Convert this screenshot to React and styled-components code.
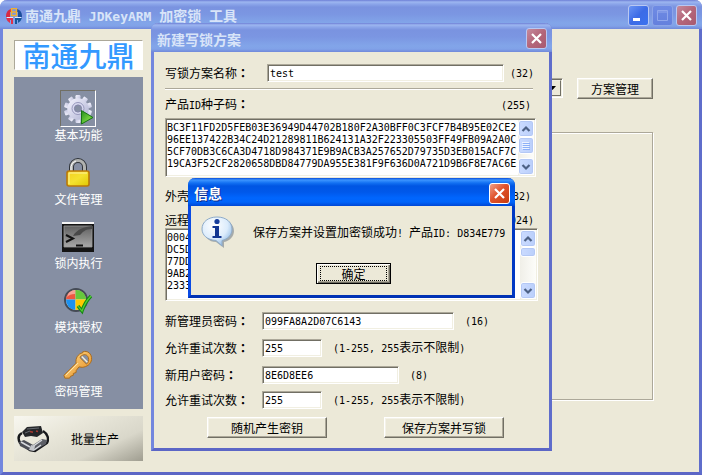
import React from "react";
import styled, { createGlobalStyle, css } from "styled-components";

const cjk = '"Noto Sans CJK SC", sans-serif';
const mono = '"DejaVu Sans Mono", "Liberation Mono", monospace';
const face = "#ece9d8";

const Global = createGlobalStyle`
  *, *::before, *::after { box-sizing: border-box; }
  body { margin: 0; background: #fff; color: #000; font: 12px/14px ${cjk}; }
  button, input, textarea, select { font: inherit; color: inherit; margin: 0; border-radius: 0; }
`;

const sunken = css`
  border: 1px solid;
  border-color: #aca899 #fff #fff #aca899;
  box-shadow: inset 1px 1px #716f64, inset -1px -1px #f1efe2;
  background: #fff;
`;

const inactiveTitle = "linear-gradient(#6d7fd6 0, #9db6f0 2px, #8ca6ea 4px, #7a93e0 7px, #7b96e2 14px, #82a5e9 23px, #81a2e8 26px, #7189da 29px)";
const activeTitle = "linear-gradient(#0a4bd8 0, #3d95ff 2px, #1270f2 5px, #0055e3 8px, #0058ea 14px, #0066fe 20px, #0064fa 24px, #0046d4 28px)";

const Latin = styled.span`
  font-family: ${mono};
  font-size: ${(p) => (p.$title ? "13px" : "10px")};
  white-space: pre;
`;
const ColonMark = styled.span`
  font-family: "Noto Sans CJK TC", sans-serif;
  font-weight: 700;
`;

const Window = styled.section`
  display: flex;
  flex-direction: column;
  border: 3px solid;
  border-top: 0;
  border-color: ${(p) => (p.$active ? "#0a4be4 #0038c4 #0032b4 #0a4be4" : "#7387de #5f6dcb #5c66c6 #7387de")};
  border-radius: 7px 7px 0 0;
  background: ${face};
`;
const MainWindow = styled(Window)`
  position: relative;
  min-height: 100vh;
`;
const Dialog = styled(Window)`
  position: absolute;
  left: 148px;
  top: 23px;
  width: 401px;
`;
const MessageBox = styled(Window)`
  position: absolute;
  left: 185px;
  top: 178px;
  width: 327px;
`;
const TitleBar = styled.header`
  display: flex;
  align-items: center;
  gap: 3px;
  height: ${(p) => (p.$active ? "28px" : "29px")};
  margin: 0 -3px;
  padding: 2px 5px 0 6px;
  border-radius: 7px 7px 0 0;
  background: ${(p) => (p.$active ? activeTitle : inactiveTitle)};
`;
const Title = styled.h1`
  flex: 1;
  margin: 0;
  font-size: 14px;
  line-height: 20px;
  font-weight: 700;
  white-space: pre;
  color: ${(p) => (p.$active ? "#fff" : "#d8e4f8")};
  text-shadow: ${(p) => (p.$active ? "1px 1px #0a2a8c" : "none")};
`;
const captionTones = {
  close: ["linear-gradient(135deg, #f0a088, #e0532c 45%, #c83c10)", "#fff"],
  closeDim: ["linear-gradient(135deg, #c58a9c, #b4667a 50%, #a85a70)", "#b9c8f2"],
  min: ["linear-gradient(135deg, #6a94f4, #3c6be6 50%, #3a72f0)", "#b9c8f2"],
  max: ["linear-gradient(#6f8be4, #6480dd)", "#8ca4e8"],
};
const Caption = styled.button`
  display: grid;
  place-items: center;
  width: 21px;
  height: 21px;
  padding: 0;
  border: 1px solid ${(p) => captionTones[p.$tone][1]};
  border-radius: 3px;
  background: ${(p) => captionTones[p.$tone][0]};
`;

const PushButton = styled.button`
  width: ${(p) => p.$w};
  height: 21px;
  padding: 0;
  line-height: 14px;
  border: 1px solid;
  border-color: #fff #716f64 #716f64 #fff;
  box-shadow: inset -1px -1px #aca899, inset 1px 1px #f4f2e8;
  background: ${face};
`;
const DefaultButton = styled.button`
  align-self: center;
  width: 75px;
  height: 21px;
  padding: 2px 3px;
  border: 1px solid #000;
  box-shadow: inset 1px 1px #fff, inset -1px -1px #716f64, inset -2px -2px #aca899;
  background: ${face};
  line-height: 13px;
  span { display: block; border: 1px dotted #000; }
`;

const Desk = styled.div`
  flex: 1;
  display: flex;
  padding: 11px;
`;
const Sidebar = styled.aside`
  display: flex;
  flex-direction: column;
  width: 129px;
  gap: 7px;
`;
const LogoBox = styled.div`
  display: grid;
  place-items: center;
  height: 30px;
  border: 1px solid;
  border-color: #aca899 #fff #fff #aca899;
  background: #fff;
  color: #3399ff;
  font: 500 28px/26px "Noto Sans CJK SC", sans-serif;
  white-space: nowrap;
`;
const Nav = styled.nav`
  display: flex;
  flex-direction: column;
  align-items: center;
  gap: 12px;
  height: 332px;
  padding-top: 13px;
  background: #868fa3;
`;
const NavItem = styled.button`
  display: flex;
  flex-direction: column;
  align-items: center;
  gap: 1px;
  padding: 0;
  border: 0;
  background: none;
  color: #fff;
  line-height: 14px;
`;
const IconFrame = styled.span`
  display: grid;
  place-items: center;
  width: 36px;
  height: 37px;
  border: 1px solid;
  border-color: ${(p) => (p.$on ? "#716f64 #fff #fff #716f64" : "transparent")};
`;
const BatchButton = styled.button`
  display: flex;
  align-items: center;
  gap: 22px;
  height: 45px;
  padding: 0 3px;
  border: 0;
  background: linear-gradient(155deg, #f8f7f0 0, #e9e7da 35%, #d9d7ca 70%, #9f9d90 100%);
`;
const Workspace = styled.main`
  flex: 1;
  display: flex;
  flex-direction: column;
  padding: 38px 35px 0 20px;
  gap: 33px;
`;
const Toolbar = styled.div`
  display: flex;
  justify-content: flex-end;
  gap: 14px;
`;
const Combo = styled.span`
  display: flex;
  width: 220px;
  height: 20px;
  padding: 1px;
  ${sunken}
`;
const ComboSelect = styled.select`
  flex: 1;
  appearance: none;
  border: 0;
  padding: 0;
  background: transparent;
`;
const ComboArrow = styled.span`
  display: grid;
  place-items: center;
  width: 17px;
  border: 1px solid;
  border-color: #f1efe2 #716f64 #716f64 #f1efe2;
  background: ${face};
`;
const Group = styled.div`
  height: 268px;
  border: 1px solid #aca899;
  box-shadow: 1px 1px #fff, inset 1px 1px #fff;
`;

const Form = styled.form`
  display: flex;
  flex-direction: column;
  padding: 12px 11px 10px;
`;
const Row = styled.div`
  display: flex;
  align-items: center;
  height: ${(p) => p.$h}px;
  margin-top: ${(p) => p.$gap || 0}px;
  white-space: nowrap;
`;
const Label = styled.label`
  width: ${(p) => p.$w || "auto"};
  flex: ${(p) => (p.$w ? "none" : 1)};
`;
const Field = styled.input`
  width: ${(p) => p.$w};
  height: 100%;
  padding: 0 2px;
  ${sunken}
  font-family: ${mono};
  font-size: 10px;
`;
const Note = styled.span`
  margin-left: ${(p) => p.$gap || 0}px;
  margin-right: ${(p) => p.$end || 0}px;
`;
const Rule = styled.hr`
  width: 368px;
  margin: 6px 0 0;
  border: 0;
  border-top: 1px solid #aca899;
  border-bottom: 1px solid #fff;
`;
const TextBox = styled.div`
  display: flex;
  width: ${(p) => p.$w};
  height: ${(p) => p.$h}px;
  margin-top: ${(p) => p.$gap}px;
  padding: 1px;
  ${sunken}
`;
const Area = styled.textarea`
  flex: 1;
  min-width: 0;
  padding: 2px 0 0;
  border: 0;
  outline: 0;
  resize: none;
  overflow: hidden;
  white-space: pre;
  background: transparent;
  font-family: ${mono};
  font-size: 10px;
  line-height: 12px;
`;
const ScrollTrack = styled.div`
  display: flex;
  flex-direction: column;
  width: 16px;
  background: linear-gradient(90deg, #f0efe8, #fdfdfa);
`;
const ScrollPiece = styled.span`
  display: grid;
  place-items: center;
  height: ${(p) => p.$h}px;
  margin-top: ${(p) => (p.$last ? "auto" : 0)};
  border: 1px solid #fff;
  border-radius: 3px;
  background: linear-gradient(90deg, #cbdbff, #bacffb);
  box-shadow: inset 0 0 0 1px #b4c8f5;
`;
const Actions = styled.div`
  display: flex;
  justify-content: space-between;
  margin-top: 8px;
  padding: 0 34px 0 42px;
`;
const MessageBody = styled.div`
  display: flex;
  flex-direction: column;
  padding: 9px 6px 11px 10px;
`;
const MessageRow = styled.div`
  display: flex;
  gap: 18px;
  height: 48px;
  white-space: nowrap;
  p { margin: 10px 0 0; line-height: 14px; }
`;

const Cross = () => (
  <svg width="13" height="13" viewBox="0 0 13 13" aria-hidden="true">
    <path d="M2 2l9 9M11 2l-9 9" stroke="#fff" strokeWidth="2.2" />
  </svg>
);
const MinGlyph = () => (
  <svg width="13" height="13" viewBox="0 0 13 13" aria-hidden="true"><path d="M1 9h7v3H1z" fill="#fff" /></svg>
);
const MaxGlyph = () => (
  <svg width="13" height="13" viewBox="0 0 13 13" aria-hidden="true">
    <path d="M1.500 1.500h10v10h-10zM1 3h11" fill="none" stroke="#91a7ec" />
  </svg>
);
const Chevron = ({ down }) => (
  <svg width="10" height="8" viewBox="0 0 10 8" aria-hidden="true">
    <path d={down ? "M1.500 2L5 5.500 8.500 2" : "M1.500 6L5 2.500 8.500 6"} fill="none" stroke="#4d6185" strokeWidth="2.200" />
  </svg>
);
const Grip = () => (
  <svg width="8" height="8" viewBox="0 0 8 8" aria-hidden="true">
    <path d="M0 .5h7M0 2.500h7M0 4.500h7M0 6.500h7" stroke="#eef4ff" />
    <path d="M1 1.500h7M1 3.500h7M1 5.500h7M1 7.500h7" stroke="#8cb0f8" />
  </svg>
);
const AppMark = () => (
  <svg width="16" height="16" viewBox="0 0 16 16" aria-hidden="true">
    <path d="M5 1A7.500 7.500 0 0 0 0 8v1h4V4h1z" fill="#d82842" />
    <path d="M0 10h7v6H5V12H4v3A8 8 0 0 1 0 10z" fill="#e0304a" />
    <path d="M11 1a7.500 7.500 0 0 1 5 7v1h-4V4h-1z" fill="#1d4e9c" />
    <path d="M16 10H9v6h2v-4h1v3a8 8 0 0 0 4-5z" fill="#16569c" />
    <path d="M5.500.5h5v7h-5zM5.500 4h5" fill="none" stroke="#f0b030" strokeWidth="1.400" />
    <path d="M1 9.500h6M9 9.500h6" stroke="#fff" strokeWidth=".8" />
  </svg>
);
const teeth = [0, 36, 72, 108, 144, 180, 216, 252, 288, 324];
const Gear = () => (
  <svg width="34" height="34" viewBox="0 0 34 34" aria-hidden="true">
    <defs>
      <linearGradient id="gearFill" x2="1" y2="1"><stop stopColor="#f5f5ff" /><stop offset="1" stopColor="#aeb1d2" /></linearGradient>
      <linearGradient id="playFill" x2="1" y2="1"><stop stopColor="#238d1c" /><stop offset=".6" stopColor="#6fce3c" /><stop offset="1" stopColor="#3da62c" /></linearGradient>
    </defs>
    <g fill="url(#gearFill)">
      {teeth.map((a) => <rect key={a} x="14.500" y="3" width="5" height="8" rx="1.200" transform={`rotate(${a} 17 17)`} />)}
      <circle cx="17" cy="17" r="10.700" />
    </g>
    <circle cx="17" cy="16.500" r="6" fill="#d9daf0" stroke="#9899bd" />
    <circle cx="17" cy="16.500" r="3.600" fill="#868fa3" stroke="#8385a8" />
    <path d="M20.500 18.500v13.500L32 25.500z" fill="url(#playFill)" stroke="#177414" />
  </svg>
);
const Padlock = () => (
  <svg width="24" height="30" viewBox="0 0 24 30" aria-hidden="true">
    <defs><linearGradient id="lockFill" x2="1" y2="1"><stop stopColor="#f4cf20" /><stop offset=".5" stopColor="#f4e130" /><stop offset="1" stopColor="#e0c800" /></linearGradient></defs>
    <path d="M5.500 14V9a6.500 6.500 0 0 1 13 0v5" fill="none" stroke="#30343a" strokeWidth="5" />
    <path d="M5.500 14V9a6.500 6.500 0 0 1 13 0v5" fill="none" stroke="#b0b2b0" strokeWidth="3" />
    <path d="M5 13V8.500A6.500 6.500 0 0 1 10 3" fill="none" stroke="#fff" />
    <rect x="1" y="13" width="22" height="15" rx="2" fill="url(#lockFill)" stroke="#ba7808" strokeWidth="1.600" />
    <path d="M3 26V15h18" fill="none" stroke="#fff2a0" />
  </svg>
);
const Terminal = () => (
  <svg width="32" height="32" viewBox="0 0 32 32" aria-hidden="true">
    <defs><linearGradient id="termFill" x2="0" y2="1"><stop stopColor="#606060" /><stop offset="1" stopColor="#a8a8a8" /></linearGradient></defs>
    <path d="M0 1h32v30H0z" fill="#141414" />
    <path d="M0 1h32v2H0z" fill="#f5f5f5" />
    <path d="M2 5h28v21H2z" fill="url(#termFill)" stroke="#999" strokeWidth=".8" />
    <path d="M11 15C15 8 22 6 30 5v3c-7 0-9 3-12 6z" fill="#494949" />
    <path d="M4 14l7 3.500L4 21" fill="none" stroke="#111" strokeWidth="2" />
    <path d="M14 24.500h7" stroke="#111" strokeWidth="2" />
  </svg>
);
const Shield = () => (
  <svg width="30" height="30" viewBox="0 0 30 30" aria-hidden="true">
    <circle cx="13" cy="14" r="11" fill="#f4f4e8" stroke="#454b55" strokeWidth="2" />
    <path d="M12.500 13.500V4a9.500 9.500 0 0 0-9.500 9.500z" fill="#ef5740" />
    <path d="M12.500 13.500V4A9.500 9.500 0 0 1 23 13.500z" fill="#66c83d" />
    <path d="M12.500 13.500V24A10 10 0 0 1 3 13.500z" fill="#1d91ef" />
    <path d="M12.500 13.500V24A10 10 0 0 0 23 13.500z" fill="#ffc800" />
    <path d="M4 11a9 9 0 0 1 8-7v4c-4 0-6 1-8 3z" fill="#fff" opacity=".45" />
    <path d="M15 20l4 5q3-9 9-15" fill="none" stroke="#178714" strokeWidth="3.400" />
    <path d="M15 20l4 5q3-9 9-15" fill="none" stroke="#53ce36" strokeWidth="1.200" />
  </svg>
);
const Key = () => (
  <svg width="30" height="30" viewBox="0 0 32 32" aria-hidden="true">
    <defs><linearGradient id="keyFill" x2="1" y2="1"><stop stopColor="#ffe091" /><stop offset="1" stopColor="#e58719" /></linearGradient></defs>
    <path fillRule="evenodd" d="M21 2c5-2 10 2 9.500 8-.5 5-5 8-10 8.500L17 18l-3 4v2l-3 1v2l-3 1-1 2H2l-1-3 13-13c-1-5 2-10 7-11zM20 6c-2 1-2 2-1 3l6 6c2-1 3-4 2-7-1-3-4-4-7-2z" fill="url(#keyFill)" stroke="#a96918" />
    <path d="M3 27L16 14" stroke="#fff0bd" />
    <path d="M20 7l6 6" stroke="#f8f0d6" strokeWidth="1.500" />
  </svg>
);
const Dongle = () => (
  <svg width="32" height="28" viewBox="0 0 32 28" aria-hidden="true">
    <path d="M5 8C1 10 1 14 3 18l10 7 5 1 12-8c2-4 1-9-4-12" fill="none" stroke="#17181b" strokeWidth="2.400" />
    <path d="M2 17l5-2 11 6-2 5-5-1-8-4z" fill="#4c4e55" />
    <path d="M13 22l12-8 5 1-1 4-12 7z" fill="#5c5e66" />
    <path d="M4 17l9 5M15 22l10-7M17 25l7-5" stroke="#d8dade" strokeWidth="1.500" />
    <path d="M14 20l4 1-1 5-5-1z" fill="#c4c6cb" />
    <path d="M5 7l5-5 14-1 2 7-6 4-6-1-6 1z" fill="#242629" />
    <path d="M10 4l12-1M8 8l5-2" stroke="#666a70" />
    <path d="M13 6.500l3 .8M19 6l2 .5" stroke="#a83a30" strokeWidth="1.600" />
  </svg>
);
const InfoBubble = () => (
  <svg width="34" height="34" viewBox="0 0 34 34" aria-hidden="true">
    <defs><radialGradient id="infoFill" cx=".4" cy=".3" r=".75"><stop stopColor="#fff" /><stop offset=".6" stopColor="#dcecfc" /><stop offset="1" stopColor="#8bb6e2" /></radialGradient></defs>
    <path d="M18 4c9 0 15 5 15 12 0 5-4 10-10 11v6l-8-6C8 27 3 22 3 16 3 9 9 4 18 4z" fill="#77808c" opacity=".6" />
    <path d="M16 2c9 0 15 5 15 12 0 6-4 10-10 11.500V31l-6-5.500C6 25 1 20 1 14 1 7 7 2 16 2z" fill="url(#infoFill)" stroke="#8eabc9" />
    <circle cx="16" cy="6.500" r="2.600" fill="#153d9c" />
    <path d="M11.500 11H18v10h2.500v2h-9v-2H14v-8h-2.500z" fill="#123692" />
  </svg>
);

const Count = ({ children, gap, end }) => <Note $gap={gap} $end={end}><Latin>{children}</Latin></Note>;
const Colon = () => <ColonMark lang="zh-Hant">：</ColonMark>;

function ScrollBar({ thumb, grip }) {
  return (
    <ScrollTrack aria-hidden="true">
      <ScrollPiece $h={17}><Chevron /></ScrollPiece>
      <ScrollPiece $h={thumb}>{grip && <Grip />}</ScrollPiece>
      <ScrollPiece $h={17} $last><Chevron down /></ScrollPiece>
    </ScrollTrack>
  );
}

function FieldRow({ id, label, value, width, height = 18, gap, labelWidth = "97px", note, noteGap = 11 }) {
  return (
    <Row $h={height} $gap={gap}>
      <Label htmlFor={id} $w={labelWidth}>{label}<Colon /></Label>
      <Field id={id} $w={width} defaultValue={value} />
      <Note $gap={noteGap}>{note}</Note>
    </Row>
  );
}

const seed = [
  "BC3F11FD2D5FEB03E36949D44702B180F2A30BFF0C3FCF7B4B95E02CE2",
  "96EE137422B34C24D21289811B624131A32F223305503FF49FB09A2A0C",
  "5CF70DB3C6CA3D4718D984371E9B9ACB3A257652D79735D3EB015ACF7C",
  "19CA3F52CF2820658DBD84779DA955E381F9F636D0A721D9B6F8E7AC6E",
].join("\n");
const remote = ["0004", "DC5D", "77DD", "9AB2", "2333"].join("\n");

const navItems = [
  ["基本功能", Gear],
  ["文件管理", Padlock],
  ["锁内执行", Terminal],
  ["模块授权", Shield],
  ["密码管理", Key],
];

const retryNote = <><Latin>(1-255, 255</Latin>表示不限制<Latin>)</Latin></>;

export default function App() {
  return (
    <>
      <Global />
      <MainWindow>
        <TitleBar>
          <AppMark />
          <Title>南通九鼎<Latin $title> JDKeyARM </Latin>加密锁<Latin $title> </Latin>工具</Title>
          <Caption type="button" $tone="min" aria-label="最小化"><MinGlyph /></Caption>
          <Caption type="button" $tone="max" aria-label="最大化"><MaxGlyph /></Caption>
          <Caption type="button" $tone="closeDim" aria-label="关闭"><Cross /></Caption>
        </TitleBar>
        <Desk>
          <Sidebar>
            <LogoBox>南通九鼎</LogoBox>
            <Nav>
              {navItems.map(([name, Icon], i) => (
                <NavItem key={name} type="button">
                  <IconFrame $on={i === 0}><Icon /></IconFrame>
                  {name}
                </NavItem>
              ))}
            </Nav>
            <BatchButton type="button"><Dongle />批量生产</BatchButton>
          </Sidebar>
          <Workspace>
            <Toolbar>
              <Combo>
                <ComboSelect aria-label="方案"><option /></ComboSelect>
                <ComboArrow>
                  <svg width="7" height="4" viewBox="0 0 7 4" aria-hidden="true"><path d="M0 0h7L3.500 4z" /></svg>
                </ComboArrow>
              </Combo>
              <PushButton type="button" $w="76px">方案管理</PushButton>
            </Toolbar>
            <Group />
          </Workspace>
        </Desk>

        <Dialog role="dialog" aria-label="新建写锁方案">
          <TitleBar>
            <Title as="h2">新建写锁方案</Title>
            <Caption type="button" $tone="closeDim" aria-label="关闭"><Cross /></Caption>
          </TitleBar>
          <Form>
            <FieldRow id="name" label="写锁方案名称" value="test" width="237px" labelWidth="102px" note={<Latin>(32)</Latin>} noteGap={6} />
            <Rule />
            <Row $h={14} $gap={8}>
              <Label htmlFor="seed">产品<Latin>ID</Latin>种子码<Colon /></Label>
              <Count end={7}>(255)</Count>
            </Row>
            <TextBox $w="371px" $h={59} $gap={6}>
              <Area id="seed" defaultValue={seed} spellCheck={false} />
              <ScrollBar thumb={17} grip />
            </TextBox>
            <Row $h={14} $gap={12}>
              <Label as="span">外壳</Label>
              <Count end={7}>(32)</Count>
            </Row>
            <Row $h={14} $gap={10}>
              <Label htmlFor="remote">远程</Label>
              <Count end={4}>(1024)</Count>
            </Row>
            <TextBox $w="373px" $h={73} $gap={1}>
              <Area id="remote" defaultValue={remote} spellCheck={false} />
              <ScrollBar thumb={10} />
            </TextBox>
            <FieldRow id="admin" label="新管理员密码" value="099FA8A2D07C6143" width="192px" gap={11} note={<Latin>(16)</Latin>} />
            <FieldRow id="adminTries" label="允许重试次数" value="255" width="60px" gap={9} note={retryNote} />
            <FieldRow id="user" label="新用户密码" value="8E6D8EE6" width="137px" gap={9} note={<Latin>(8)</Latin>} />
            <FieldRow id="userTries" label="允许重试次数" value="255" width="60px" gap={7} note={retryNote} />
            <Actions>
              <PushButton type="button" $w="120px">随机产生密钥</PushButton>
              <PushButton type="button" $w="120px">保存方案并写锁</PushButton>
            </Actions>
          </Form>
        </Dialog>

        <MessageBox $active role="alertdialog" aria-label="信息">
          <TitleBar $active>
            <Title as="h2" $active>信息</Title>
            <Caption type="button" $tone="close" aria-label="关闭"><Cross /></Caption>
          </TitleBar>
          <MessageBody>
            <MessageRow>
              <InfoBubble />
              <p>保存方案并设置加密锁成功<Latin>! </Latin>产品<Latin>ID: D834E779</Latin></p>
            </MessageRow>
            <DefaultButton type="button"><span>确定</span></DefaultButton>
          </MessageBody>
        </MessageBox>
      </MainWindow>
    </>
  );
}
